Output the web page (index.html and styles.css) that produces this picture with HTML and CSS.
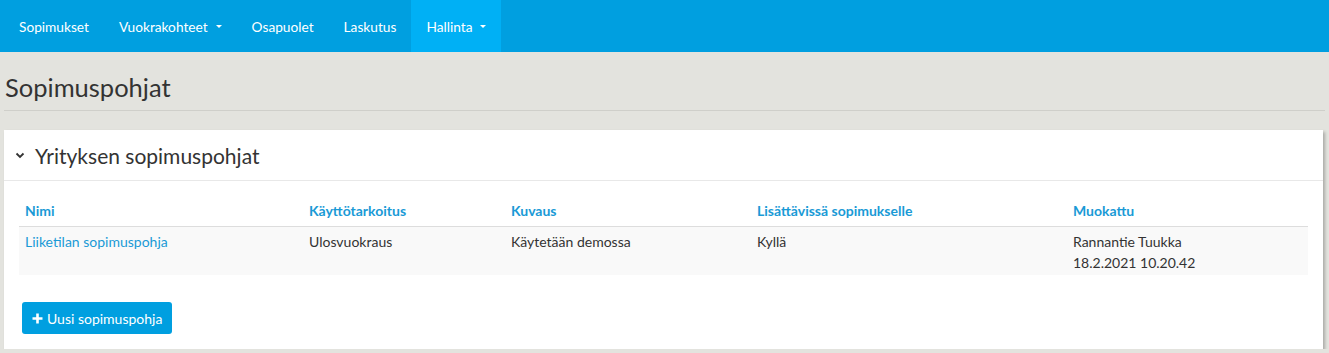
FILE: index.html
```html
<!DOCTYPE html>
<html lang="fi">
<head>
    <meta charset="UTF-8">
    <meta name="viewport" content="width=device-width, initial-scale=1.0">
    <title>Sopimuspohjat</title>
    <link rel="stylesheet" href="styles.css">
</head>
<body>
    <nav class="navbar">
        <a class="nav-item" href="#">Sopimukset</a>
        <a class="nav-item" href="#">Vuokrakohteet<span class="caret"></span></a>
        <a class="nav-item" href="#">Osapuolet</a>
        <a class="nav-item" href="#">Laskutus</a>
        <a class="nav-item active" href="#">Hallinta<span class="caret"></span></a>
    </nav>

    <main class="page">
        <h1 class="page-title">Sopimuspohjat</h1>

        <section class="panel">
            <div class="panel-heading">
                <svg class="chevron" width="10" height="7" viewBox="0 0 10 7">
                    <path d="M1.5 1.5 L5 5 L8.5 1.5" fill="none" stroke="#333" stroke-width="1.8"/>
                </svg>
                <h2>Yrityksen sopimuspohjat</h2>
            </div>
            <div class="panel-body">
                <table class="table">
                    <thead>
                        <tr>
                            <th class="col-name">Nimi</th>
                            <th class="col-use">Käyttötarkoitus</th>
                            <th class="col-desc">Kuvaus</th>
                            <th class="col-add">Lisättävissä sopimukselle</th>
                            <th>Muokattu</th>
                        </tr>
                    </thead>
                    <tbody>
                        <tr>
                            <td><a href="#">Liiketilan sopimuspohja</a></td>
                            <td>Ulosvuokraus</td>
                            <td>Käytetään demossa</td>
                            <td>Kyllä</td>
                            <td>Rannantie Tuukka<br>18.2.2021 10.20.42</td>
                        </tr>
                    </tbody>
                </table>
                <button class="btn-primary">
                    <svg class="plus" width="11" height="11" viewBox="0 0 11 11">
                        <path d="M5.5 0.5 V10.5 M0.5 5.5 H10.5" stroke="#fff" stroke-width="2.6"/>
                    </svg>
                    Uusi sopimuspohja
                </button>
            </div>
        </section>
    </main>
</body>
</html>
```

FILE: styles.css
```css
body {
    margin: 0;
    padding: 0;
    background-color: #e3e3de;
    font-family: Lato, "Open Sans", sans-serif;
    font-size: 14px;
    color: #333;
}

.navbar {
    display: flex;
    height: 52px;
    background-color: #009fe0;
    padding-left: 4px;
}

.nav-item {
    display: flex;
    align-items: center;
    padding: 0 15px;
    color: #fff;
    text-decoration: none;
    font-size: 13.7px;
}

.nav-item.active {
    background-color: #00b0f5;
}

.caret {
    display: inline-block;
    width: 0;
    height: 0;
    margin-left: 8px;
    margin-top: 1px;
    border-top: 3px solid #fff;
    border-left: 3.5px solid transparent;
    border-right: 3.5px solid transparent;
}

.page {
    padding: 0 4px;
}

.page-title {
    margin: 0;
    padding: 20px 0 8px 1px;
    font-size: 25.5px;
    font-weight: 400;
    line-height: 30px;
    color: #333;
    border-bottom: 1px solid #cfcfca;
}

.panel {
    margin-top: 19px;
    margin-right: 2px;
    background-color: #fff;
    box-shadow: 2px 2px 3px rgba(0, 0, 0, 0.25);
}

.panel-heading {
    display: flex;
    align-items: center;
    height: 50px;
    padding-left: 11px;
    border-bottom: 1px solid #e8e8e8;
}

.chevron {
    margin-right: 10px;
}

.panel-heading h2 {
    margin: 0;
    font-size: 21px;
    font-weight: 400;
    color: #333;
}

.panel-body {
    padding: 19px 15px 15px 15px;
}

.table {
    width: 100%;
    border-collapse: collapse;
    table-layout: fixed;
}

.table th {
    text-align: left;
    color: #1a9ad6;
    font-weight: 700;
    line-height: 20px;
    padding: 1px 6px 5px 6px;
    border-bottom: 1px solid #ddd;
}

.table td {
    vertical-align: top;
    padding: 4px 6px 2px 6px;
    line-height: 21px;
    background-color: #f9f9f9;
}

.table a {
    color: #1a9ad6;
    text-decoration: none;
}

.col-name { width: 272px; }
.col-use { width: 190px; }
.col-desc { width: 234px; }
.col-add { width: 304px; }

.btn-primary {
    display: flex;
    align-items: center;
    margin-top: 27px;
    margin-left: 3px;
    height: 32px;
    padding: 0 10px;
    background-color: #009fe0;
    color: #fff;
    border: none;
    border-radius: 3px;
    font-family: inherit;
    font-size: 14px;
    cursor: pointer;
}

.plus {
    margin-right: 4px;
}
```
